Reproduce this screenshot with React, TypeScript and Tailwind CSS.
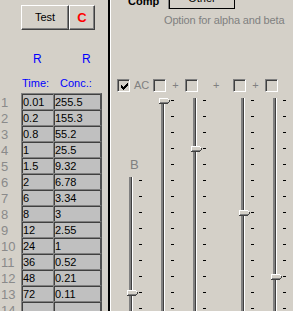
import React from "react";

const ROWS = [
  ["0.01", "255.5"],
  ["0.2", "155.3"],
  ["0.8", "55.2"],
  ["1", "25.5"],
  ["1.5", "9.32"],
  ["2", "6.78"],
  ["6", "3.34"],
  ["8", "3"],
  ["12", "2.55"],
  ["24", "1"],
  ["36", "0.52"],
  ["48", "0.21"],
  ["72", "0.11"],
  ["", ""],
];

// classic sunken checkbox
function CheckBox({ checked = false }: { checked?: boolean }) {
  return (
    <div className="flex h-[13px] w-[13px] shrink-0 items-center justify-center border border-t-[#808080] border-l-[#808080] border-r-white border-b-white bg-[#D4D0C8] shadow-[inset_1px_1px_0_#404040]">
      {checked && (
        <svg width="7" height="7" viewBox="0 0 7 7" shapeRendering="crispEdges" className="ml-px mt-px">
          <path
            d="M0 2h1v3H0zM1 3h1v3H1zM2 4h1v3H2zM3 3h1v3H3zM4 2h1v3H4zM5 1h1v3H5zM6 0h1v3H6z"
            fill="#000"
          />
        </svg>
      )}
    </div>
  );
}

function Thumb({ top }: { top: number }) {
  return (
    <svg
      width="12"
      height="6"
      viewBox="0 0 12 6"
      shapeRendering="crispEdges"
      className="absolute left-[-2px]"
      style={{ top }}
    >
      <path d="M0 0h9l2 2v2l-2 2H0z" fill="#D4D0C8" />
      <path d="M0 0h9v1H1v4H0z" fill="#FFFFFF" />
      <path d="M9 1h1v1H9z" fill="#FFFFFF" />
      <path d="M1 4h8v1H1z" fill="#808080" />
      <path d="M0 5h9v1H0z" fill="#404040" />
      <path d="M9 4h1v1H9zM10 2h1v2h-1z" fill="#404040" />
    </svg>
  );
}

// vertical trackbar: track, ticks on the right, thumb at tick index `pos`
function Slider({ pos, ticks, first, className = "" }: { pos: number; ticks: number; first: number; className?: string }) {
  return (
    <div className={`relative flex ${className}`}>
      <div className="w-[4px] border-l-2 border-l-[#808080] border-r border-r-white bg-[#404040]" />
      <div className="ml-[6px] flex flex-col gap-[15px]" style={{ paddingTop: first }}>
        {Array.from({ length: ticks }).map((_, i) => (
          <div key={i} className="h-px w-[3px] bg-black" />
        ))}
      </div>
      <Thumb top={first + pos * 16 - 2} />
    </div>
  );
}

export default function App() {
  return (
    <div className="flex h-[311px] w-[293px] overflow-hidden bg-[#D4D0C8] font-['Liberation_Sans',Arial,sans-serif] select-none">
      {/* left: data table */}
      <div className="flex w-[108px] shrink-0 flex-col">
        <div className="flex pl-[21px] pt-[5px]">
          <button className="h-[25px] w-[48px] border border-t-white border-l-white border-r-[#404040] border-b-[#404040] bg-[#D4D0C8] text-[11px] leading-none text-black shadow-[inset_-1px_-1px_0_#808080]">
            Test
          </button>
          <button className="h-[25px] w-[26px] border border-t-white border-l-white border-r-[#404040] border-b-[#404040] bg-[#D4D0C8] text-[13px] font-bold leading-none text-[#FF0000] shadow-[inset_-1px_-1px_0_#808080]">
            C
          </button>
        </div>

        <div className="mt-[23px] flex h-[12px] text-[12px] leading-[12px] text-[#0000FF]">
          <span className="w-[82px] pl-[33px]">R</span>
          <span>R</span>
        </div>

        <div className="mt-[13px] flex h-[11px] whitespace-nowrap text-[11px] leading-[11px] text-[#0000FF]">
          <span className="w-[60px] pl-[22px]">Time:</span>
          <span>Conc.:</span>
        </div>

        <div className="mt-[4px] flex flex-col">
          {ROWS.map(([t, c], i) => (
            <div key={i} className="flex h-[16px] shrink-0">
              <div className="w-[21px] pl-px pt-[2px] text-[13px] leading-[16px] text-[#8a8a8a]">{i + 1}</div>
              <div className="h-[16px] w-[32px] border-t border-l border-[#808080] bg-[#C0C0C0] pl-px text-[11px] leading-[16px] text-black shadow-[inset_1px_1px_0_#404040]">
                {t}
              </div>
              <div className="h-[16px] w-[49px] border-t border-l border-r-2 border-t-[#808080] border-l-[#808080] border-r-[#505050] bg-[#C0C0C0] pl-px text-[11px] leading-[16px] text-black shadow-[inset_1px_1px_0_#404040]">
                {c}
              </div>
            </div>
          ))}
        </div>
      </div>

      {/* divider */}
      <div className="w-[2px] shrink-0 bg-black" />
      <div className="w-px shrink-0 bg-white" />

      {/* right: tab page */}
      <div className="flex min-w-0 flex-1 flex-col">
        <div className="-mt-[7px] flex h-[16px] shrink-0 text-[11px] leading-[11px] text-black">
          <div className="w-[58px] border-r border-r-[#808080] pl-[17px] pt-[3px] font-bold">Comp</div>
          <div className="w-[66px] border border-t-0 border-black text-center">Other</div>
        </div>

        <div className="ml-[53px] mt-[6px] h-[11px] shrink-0 whitespace-nowrap text-[11px] leading-[11px] tracking-[-0.15px] text-[#808080]">
          Option for alpha and beta
        </div>

        <div className="mt-[53px] flex h-[13px] shrink-0 items-center text-[11px] leading-[11px] text-[#808080]">
          <div className="ml-[6px]">
            <CheckBox checked />
          </div>
          <span className="w-[23px] pl-[4px]">AC</span>
          <CheckBox />
          <span className="w-[19px] text-center">+</span>
          <CheckBox />
          <span className="w-[35px] pl-[15px]">+</span>
          <CheckBox />
          <span className="w-[19px] text-center">+</span>
          <CheckBox />
        </div>

        <div className="mt-[6px] flex min-h-0 flex-1">
          <div className="ml-[18px] flex flex-col">
            <span className="ml-px mt-[60px] h-[13px] text-[13px] leading-[13px] text-[#808080]">B</span>
            <Slider pos={7} ticks={9} first={3} className="mt-[6px] flex-1" />
          </div>
          <Slider pos={0} ticks={14} first={2} className="ml-[19px]" />
          <Slider pos={3} ticks={14} first={2} className="ml-[19px]" />
          <Slider pos={7} ticks={14} first={2} className="ml-[35px]" />
          <Slider pos={11} ticks={14} first={2} className="ml-[19px]" />
        </div>
      </div>
    </div>
  );
}
